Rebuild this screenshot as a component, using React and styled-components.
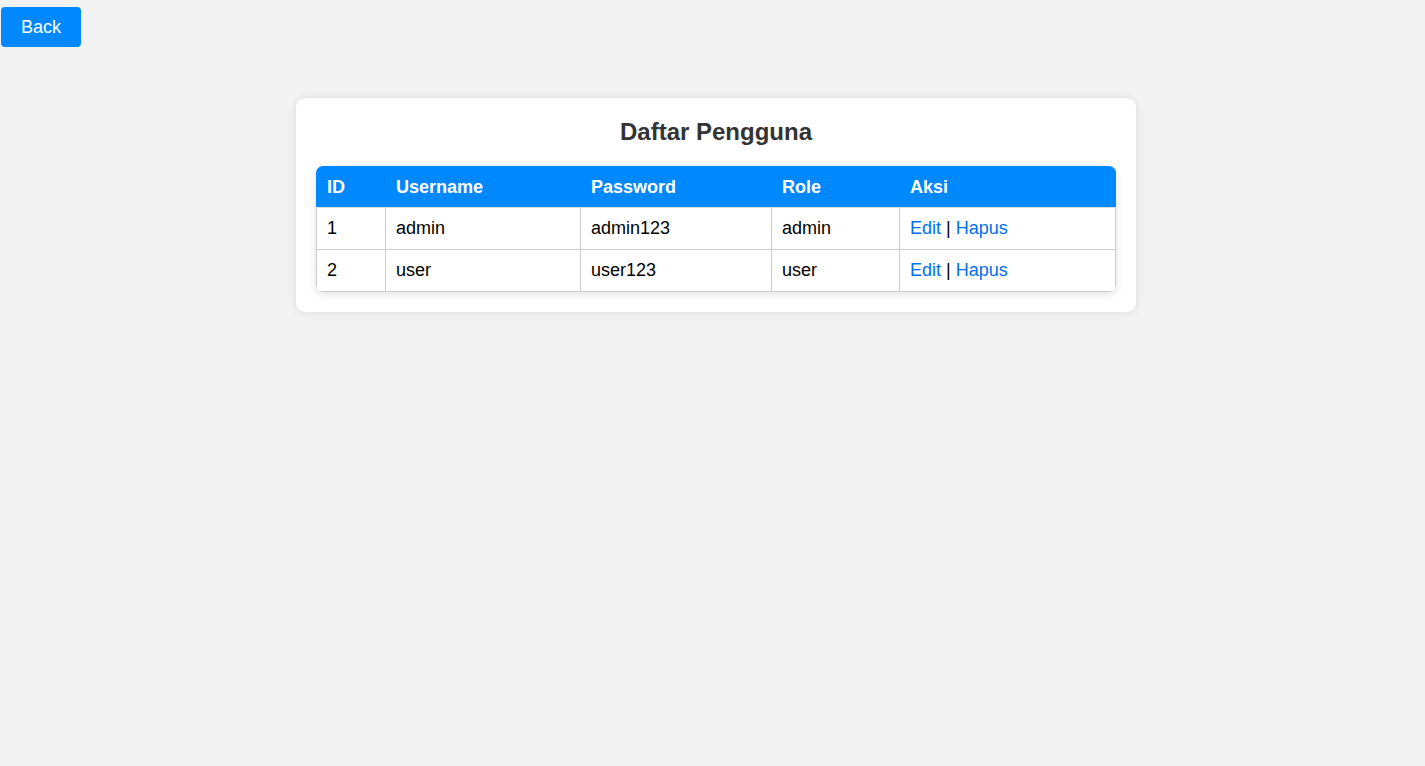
import React from "react";
import styled, { createGlobalStyle } from "styled-components";

const GlobalStyle = createGlobalStyle`
    body {
        margin: 0;
        background: #f3f3f3;
        font-family: "Liberation Sans", Arial, sans-serif;
    }
`;

const Page = styled.div`
    min-height: 100vh;
    padding: 7px 0 0 1px;
    box-sizing: border-box;
`;

const BackButton = styled.button`
    display: block;
    width: 80px;
    height: 40px;
    border: none;
    border-radius: 4px;
    background: #0088ff;
    color: #fff;
    font-family: inherit;
    font-size: 18px;
    cursor: pointer;
`;

const Wrapper = styled.div`
    display: flex;
    justify-content: center;
    padding: 51px 0 0 6px;
`;

const Card = styled.div`
    width: 800px;
    padding: 20px;
    background: #fff;
    border-radius: 9px;
    box-shadow: 0 0 10px rgba(0, 0, 0, 0.1);
`;

const Title = styled.h2`
    margin: 0 0 21px;
    font-size: 24px;
    line-height: 27px;
    text-align: center;
    color: #333;
`;

const TableBox = styled.div`
    border-radius: 7px;
    overflow: hidden;
    box-shadow: 0 2px 8px rgba(0, 0, 0, 0.12);
`;

const Table = styled.table`
    width: 100%;
    border-collapse: collapse;
    table-layout: fixed;
    font-size: 18px;
`;

const Th = styled.th`
    background: #0088ff;
    color: #fff;
    text-align: left;
    font-weight: bold;
    padding: 10px 10px;
    line-height: 20px;
    border: 1px solid #0088ff;
    border-bottom-color: #ddd;
`;

const Td = styled.td`
    padding: 10px 10px;
    line-height: 21px;
    border: 1px solid #ccc;
    color: #000;
`;

const Link = styled.a`
    color: #0070f0;
    text-decoration: none;
    cursor: pointer;
`;

const users = [
    { id: 1, username: "admin", password: "admin123", role: "admin" },
    { id: 2, username: "user", password: "user123", role: "user" },
];

function App() {
    return (
        <>
            <GlobalStyle />
            <Page>
                <BackButton>Back</BackButton>
                <Wrapper>
                    <Card>
                        <Title>Daftar Pengguna</Title>
                        <TableBox>
                            <Table>
                                <colgroup>
                                    <col style={{ width: 69 }} />
                                    <col style={{ width: 195 }} />
                                    <col style={{ width: 191 }} />
                                    <col style={{ width: 128 }} />
                                    <col />
                                </colgroup>
                                <thead>
                                    <tr>
                                        <Th>ID</Th>
                                        <Th>Username</Th>
                                        <Th>Password</Th>
                                        <Th>Role</Th>
                                        <Th>Aksi</Th>
                                    </tr>
                                </thead>
                                <tbody>
                                    {users.map((u) => (
                                        <tr key={u.id}>
                                            <Td>{u.id}</Td>
                                            <Td>{u.username}</Td>
                                            <Td>{u.password}</Td>
                                            <Td>{u.role}</Td>
                                            <Td>
                                                <Link>Edit</Link> | <Link>Hapus</Link>
                                            </Td>
                                        </tr>
                                    ))}
                                </tbody>
                            </Table>
                        </TableBox>
                    </Card>
                </Wrapper>
            </Page>
        </>
    );
}

export default App;
